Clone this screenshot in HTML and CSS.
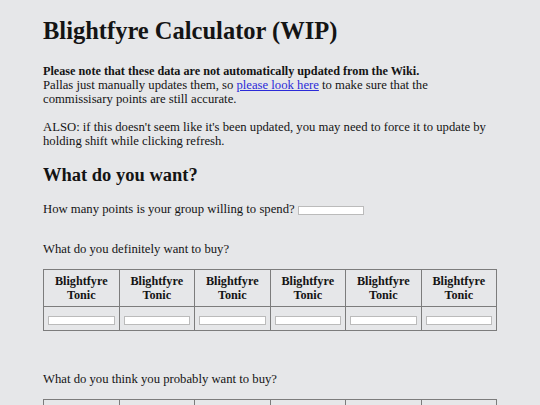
FILE: index.html
```html
<!DOCTYPE html>
<html>
<head>
<meta charset="utf-8">
<link rel="stylesheet" href="styles.css">
</head>
<body>
<div class="page">
  <h1 class="title">Blightfyre Calculator (WIP)</h1>
  <p class="note"><b class="warn">Please note that these data are not automatically updated from the Wiki.</b><br>Pallas just manually updates them, so <a href="#">please look here</a> to make sure that the commissisary points are still accurate.</p>
  <p class="note">ALSO: if this doesn't seem like it's been updated, you may need to force it to update by holding shift while clicking refresh.</p>
  <h2 class="section">What do you want?</h2>
  <p class="question">How many points is your group willing to spend? <input class="field" type="text"></p>
  <p class="question q-gap">What do you definitely want to buy?</p>
  <table class="items">
    <tr>
      <th>Blightfyre<br>Tonic</th><th>Blightfyre<br>Tonic</th><th>Blightfyre<br>Tonic</th><th>Blightfyre<br>Tonic</th><th>Blightfyre<br>Tonic</th><th>Blightfyre<br>Tonic</th>
    </tr>
    <tr>
      <td><input class="field cell" type="text"></td><td><input class="field cell" type="text"></td><td><input class="field cell" type="text"></td><td><input class="field cell" type="text"></td><td><input class="field cell" type="text"></td><td><input class="field cell" type="text"></td>
    </tr>
  </table>
  <p class="question q-gap2">What do you think you probably want to buy?</p>
  <table class="items">
    <tr>
      <th>Blightfyre<br>Tonic</th><th>Blightfyre<br>Tonic</th><th>Blightfyre<br>Tonic</th><th>Blightfyre<br>Tonic</th><th>Blightfyre<br>Tonic</th><th>Blightfyre<br>Tonic</th>
    </tr>
    <tr>
      <td><input class="field cell" type="text"></td><td><input class="field cell" type="text"></td><td><input class="field cell" type="text"></td><td><input class="field cell" type="text"></td><td><input class="field cell" type="text"></td><td><input class="field cell" type="text"></td>
    </tr>
  </table>
</div>
</body>
</html>
```
FILE: styles.css
```css
html, body {
  margin: 0;
  padding: 0;
  background: #e6e7e9;
}
body {
  font-family: "Liberation Serif", "Times New Roman", serif;
  font-size: 12.7px;
  color: #141414;
}
.page {
  padding: 0 43px;
}
.title {
  font-size: 24.5px;
  font-weight: bold;
  margin: 0;
  padding-top: 16px;
  line-height: 30px;
}
.note {
  margin: 18px 0 0;
  line-height: 14px;
  max-width: 444px;
}
.warn {
  font-size: 12.2px;
}
.note + .note {
  margin-top: 14px;
}
a {
  color: #2b2bd8;
}
.section {
  font-size: 18.5px;
  margin: 15px 0 0;
  line-height: 24px;
}
.question {
  margin: 15px 0 0;
  line-height: 14px;
}
.q-gap { margin-top: 26px; }
.q-gap2 { margin-top: 41px; }
.field {
  width: 66px;
  height: 9px;
  padding: 0;
  border: 1px solid #bbb;
  background: #fff;
  box-sizing: border-box;
  vertical-align: middle;
}
.items {
  width: 100%;
  border-collapse: collapse;
  margin-top: 13px;
  table-layout: fixed;
}
.items th, .items td {
  border: 1px solid #7c7c7c;
  text-align: center;
}
.items th {
  font-size: 12.2px;
  line-height: 14px;
  padding: 4px 2px 4px;
}
.items td {
  padding: 9px 4px 5px;
  line-height: 0;
}
.cell {
  width: 100%;
  height: 9px;
}
```
